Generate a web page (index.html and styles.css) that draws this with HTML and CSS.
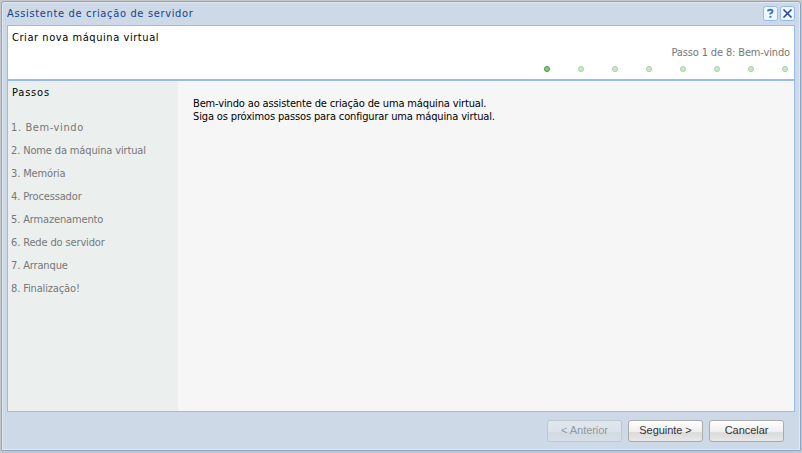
FILE: index.html
```
<!DOCTYPE html>
<html lang="pt">
<head>
<meta charset="utf-8">
<title>Assistente de criação de servidor</title>
<link rel="stylesheet" href="styles.css">
</head>
<body>
<div class="window">
  <div class="titlebar">
    <span class="title">Assistente de criação de servidor</span>
    <span class="tool"><svg width="15" height="15" viewBox="0 0 15 15"><rect x=".5" y=".5" width="14" height="14" rx="2" fill="#edf6ff" stroke="#91b9f0"/><path d="M5 5.2Q5.1 3.7 7.3 3.7T9.6 5.3Q9.6 6.5 7.4 7.6V8.6M7.4 9.9v1.9" fill="none" stroke="#3f78ae" stroke-width="2"/></svg></span>
    <span class="tool"><svg width="15" height="15" viewBox="0 0 15 15"><rect x=".5" y=".5" width="14" height="14" rx="2" fill="#edf6ff" stroke="#91b9f0"/><path d="M3.5 3.5l8 8M11.5 3.5l-8 8" stroke="#2745a0" stroke-width="1.6"/></svg></span>
  </div>
  <div class="panel">
    <div class="header">
      <div class="heading">Criar nova máquina virtual</div>
      <div class="progress">Passo 1 de 8: Bem-vindo</div>
      <div class="dots"><i class="dot on"></i><i class="dot"></i><i class="dot"></i><i class="dot"></i><i class="dot"></i><i class="dot"></i><i class="dot"></i><i class="dot"></i></div>
    </div>
    <div class="content">
      <div class="steps">
        <div class="steps-title">Passos</div>
        <div class="step current">1. Bem-vindo</div>
        <div class="step">2. Nome da máquina virtual</div>
        <div class="step">3. Memória</div>
        <div class="step">4. Processador</div>
        <div class="step">5. Armazenamento</div>
        <div class="step">6. Rede do servidor</div>
        <div class="step">7. Arranque</div>
        <div class="step">8. Finalização!</div>
      </div>
      <div class="message">Bem-vindo ao assistente de criação de uma máquina virtual.<br>Siga os próximos passos para configurar uma máquina virtual.</div>
    </div>
  </div>
  <div class="footer">
    <div class="button disabled">&lt; Anterior</div>
    <div class="button">Seguinte &gt;</div>
    <div class="button">Cancelar</div>
  </div>
</div>
</body>
</html>
```
FILE: styles.css
```
* { box-sizing: border-box; }
body {
  margin: 0;
  width: 802px;
  height: 453px;
  overflow: hidden;
  padding: 1px 1px 2px;
  background: #c4c8cb;
  font: 11px/13px "DejaVu Sans Condensed", "DejaVu Sans", sans-serif;
  letter-spacing: -.14px;
  white-space: nowrap;
}
.window {
  height: 450px;
  border: 1px solid #8ba4c6;
  border-radius: 3px 3px 0 0;
  background: #cdd9e7;
  box-shadow: inset 0 0 0 1px #dfe8f3;
  padding: 0 5px;
}
.titlebar { height: 23px; display: flex; align-items: center; gap: 2px; }
.title { flex: 1; color: #15428b; letter-spacing: .66px; }
.tool { width: 15px; height: 15px; }
.tool svg { display: block; }
.panel { height: 387px; border: 1px solid #99bbe8; background: #f6f6f6; }
.header { height: 55px; border-bottom: 2px solid #99bbe8; background: #fff; padding: 5px 4px 0; }
.heading { letter-spacing: .56px; }
.progress { margin-top: 2px; text-align: right; color: #777; }
.dots { display: flex; justify-content: flex-end; gap: 28px; padding: 7px 2px 0 0; }
.dot { width: 6px; height: 6px; border-radius: 50%; border: 1px solid #a5d0a5; background: #c9ebc7; }
.dot.on { border-color: #429b3e; background: #83cc7c; }
.content { display: flex; height: 330px; }
.steps { width: 170px; background: #ebf0ee; padding: 5px 3px; color: #777; }
.steps-title { color: #000; letter-spacing: .8px; padding-left: 1px; margin-bottom: 22px; }
.step { height: 23px; }
.step.current { letter-spacing: .6px; }
.message { padding: 16px 15px; }
.footer { display: flex; justify-content: flex-end; gap: 6px; padding: 8px 11px 0 0; }
.button {
  width: 75px;
  height: 22px;
  border: 1px solid #aaa;
  border-radius: 3px;
  background: linear-gradient(#fff, #eee 55%, #dadada 58%, #e8e8e8);
  font: 11px/19px "Liberation Sans", sans-serif;
  letter-spacing: -.05px;
  color: #333;
  text-align: center;
}
.disabled { opacity: .4; }
```
